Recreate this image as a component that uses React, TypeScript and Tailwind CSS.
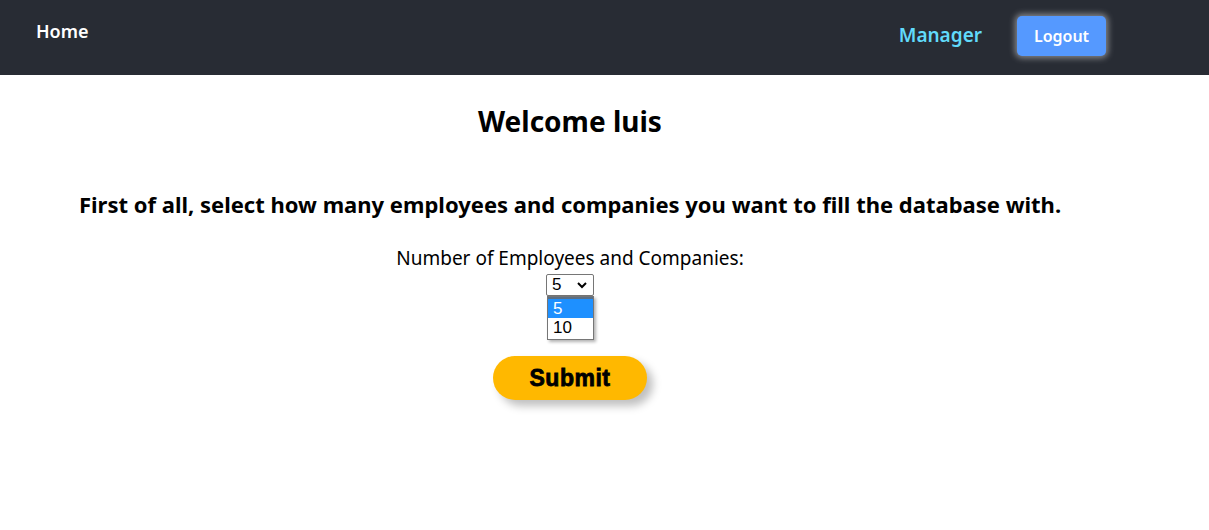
const Navbar = () => {
  return (
    <nav className="h-[75px] bg-[#282c34] flex items-center justify-between pl-9 pr-[103px] pb-[4px]">
      <a className="text-white text-[18px] font-semibold -mt-[9px]">Home</a>
      <div className="flex items-center gap-[35px]">
        <a className="text-[#61dafb] text-[19px] font-semibold">Manager</a>
        <button className="bg-[#5599ff] text-white text-[16px] font-semibold w-[89px] h-[40px] rounded-[5px] shadow-[0_0_6px_2px_rgba(255,255,255,0.45)]">
          Logout
        </button>
      </div>
    </nav>
  );
};

const Dropdown = () => {
  return (
    <div className="relative w-[48px] h-[22px]">
      <div
        className="w-[48px] h-[22px] border border-[#767676] rounded-[2px] bg-white flex items-center justify-between pl-[5px] pr-[5px] text-[17px] text-black"
        style={{ fontFamily: '"Liberation Sans", Arial, sans-serif' }}
      >
        <span>5</span>
        <svg className="w-[12px] h-[12px]" viewBox="0 0 12 12" fill="none" stroke="currentColor" strokeWidth={2}>
          <path d="M2 4l4 4 4-4" />
        </svg>
      </div>
      <div
        className="absolute left-[1px] top-[22px] w-[47px] border border-[#767676] bg-white shadow-[2px_2px_3px_rgba(0,0,0,0.3)] text-[17px] leading-[20px] text-left"
        style={{ fontFamily: '"Liberation Sans", Arial, sans-serif' }}
      >
        <div className="bg-[#1e90ff] text-white px-[5px] h-[21px] border-t-2 border-[#5a6f85]">5</div>
        <div className="text-black px-[5px] h-[21px]">10</div>
      </div>
    </div>
  );
};

export default function App() {
  return (
    <div className="min-h-[530px] bg-white" style={{ fontFamily: '"Noto Sans", "Open Sans", sans-serif' }}>
      <Navbar />
      <main className="w-[1140px] flex flex-col items-center text-black">
        <h1 className="text-[28px] font-bold mt-[27px] leading-[38px]">Welcome luis</h1>
        <h2 className="text-[22px] font-bold mt-[49px] leading-[30px] tracking-[0px] whitespace-nowrap">
          First of all, select how many employees and companies you want to fill the database with.
        </h2>
        <label className="text-[19px] mt-[26px] leading-[26px]">Number of Employees and Companies:</label>
        <div className="mt-[3px]">
          <Dropdown />
        </div>
        <button
          className="mt-[60px] w-[154px] h-[44px] rounded-full bg-[#ffb800] text-black text-[23px] font-bold tracking-[0.5px] shadow-[6px_6px_8px_rgba(0,0,0,0.25)] [-webkit-text-stroke:0.8px_black]"
          style={{ fontFamily: '"Liberation Sans", Arial, sans-serif' }}
        >
          Submit
        </button>
      </main>
    </div>
  );
}
